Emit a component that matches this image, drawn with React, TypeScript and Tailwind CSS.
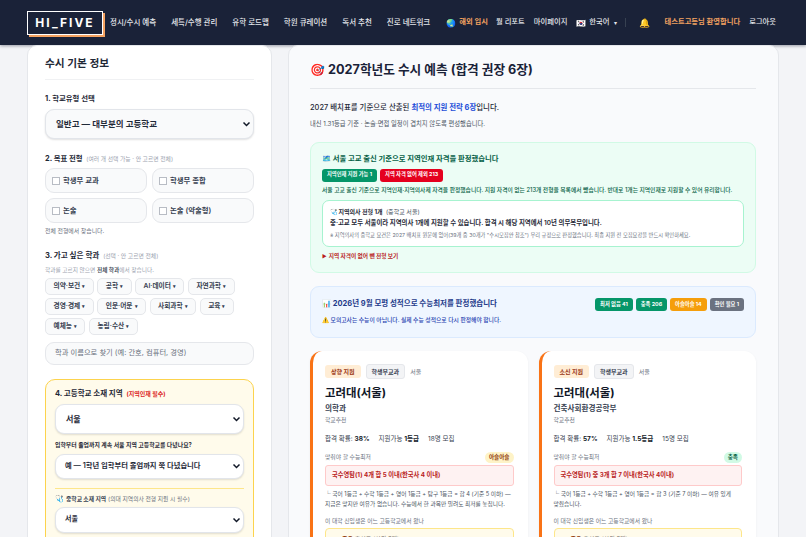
const navLinks = ["정시/수시 예측", "세특/수행 관리", "유학 로드맵", "학원 큐레이션", "독서 추천", "진로 네트워크"];
const majors = [
  ["의약·보건", "공학", "AI·데이터", "자연과학"],
  ["경영·경제", "인문·어문", "사회과학", "교육"],
  ["예체능", "농림·수산"],
];

function Chevron() {
  return (
    <svg viewBox="0 0 12 12" className="absolute right-[2px] top-1/2 h-[9px] w-[9px] -translate-y-1/2" fill="none" stroke="#111827" strokeWidth="2">
      <path d="M2 4l4 4 4-4" />
    </svg>
  );
}

function SelectBox({ label, className }: { label: string; className: string }) {
  return (
    <div className={`relative flex items-center rounded-[9px] border border-[#e2e5ea] shadow-[0_1px_2px_rgba(0,0,0,0.12)] ${className}`}>
      <span className="text-[#1f2937]">{label}</span>
      <Chevron />
    </div>
  );
}

function Check({ label }: { label: string }) {
  return (
    <div className="flex h-[25px] items-center gap-[3px] rounded-[9px] border border-[#e5e7eb] bg-[#f9fafb] pl-[6px] text-[7.4px] font-semibold text-[#374151]">
      <span className="h-[8px] w-[8px] border border-[#b8bcc4] bg-white" />
      {label}
    </div>
  );
}

function Tag({ className, children }: { className: string; children: string }) {
  return <span className={`flex h-[13px] items-center rounded-[3px] px-[5px] text-[5.3px] font-bold text-white ${className}`}>{children}</span>;
}

function Card({ tone, major, prob, grade, seats, status, statusClass, rule, detail }: {
  tone: string; major: string; prob: string; grade: string; seats: string; status: string; statusClass: string; rule: string; detail: string[];
}) {
  return (
    <div className="h-[240px] min-w-0 flex-1 rounded-[12px] border-l-[3px] border-[#f97316] bg-white pl-[12px] pr-[14px] pt-[13px] shadow-[0_1px_3px_rgba(15,23,42,0.05)]">
      <div className="flex items-center gap-[5px]">
        <span className="flex h-[13px] items-center rounded-[3px] bg-[#ffedd5] px-[6px] text-[6px] font-bold text-[#9a3412]">{tone}</span>
        <span className="flex h-[15px] items-center rounded-[3px] border border-[#e5e7eb] bg-[#f3f4f6] px-[5px] text-[6px] font-bold text-[#374151]">학생부교과</span>
        <span className="text-[6px] text-[#6b7280]">서울</span>
      </div>
      <div className="mt-[6px] text-[11.4px] font-bold leading-[16px] text-[#111827]">고려대(서울)</div>
      <div className="mt-[2px] text-[7.6px] font-semibold leading-[12px] text-[#374151]">{major}</div>
      <div className="text-[5.8px] leading-[10px] text-[#6b7280]">학교추천</div>
      <div className="mt-[8px] flex gap-[9px] text-[6.5px] leading-[12px] text-[#374151]">
        <span>합격 확률: <b className="text-[#111827]">{prob}</b></span>
        <span>지원가능 <b className="text-[#111827]">{grade}</b></span>
        <span>{seats}</span>
      </div>
      <div className="mt-[7px] flex h-[11px] items-center justify-between text-[5.8px] text-[#6b7280]">
        맞춰야 할 수능최저
        <span className={`flex h-[11px] items-center rounded-full px-[4px] text-[5.6px] font-bold ${statusClass}`}>{status}</span>
      </div>
      <div className="mt-[2px] flex h-[21px] items-center rounded-[3px] border border-[#fecaca] bg-[#fef2f2] pl-[6px] text-[6.25px] font-bold text-[#b91c1c]">{rule}</div>
      <div className="mt-[3px] whitespace-nowrap text-[5.7px] leading-[10px] text-[#4b5563]">
        {detail.map((line) => <div key={line}>{line}</div>)}
      </div>
      <div className="mt-[7px] text-[5.8px] leading-[10px] text-[#6b7280]">이 대학 신입생은 어느 고등학교에서 왔나</div>
      <div className="mt-[2px] h-[40px] rounded-[4px] border border-[#fde68a] bg-[#fffbeb] pl-[16px] pt-[5px] text-[6px] leading-[9px] text-[#78716c]">
        <b className="text-[#92400e]">주요</b> 출신고 (상위 3개)
      </div>
    </div>
  );
}

export default function App() {
  return (
    <div className="h-[537px] w-[806px] overflow-hidden bg-[#f3f4f7]" style={{ fontFamily: 'Inter, "Noto Sans CJK KR", sans-serif' }}>
      {/* 헤더 */}
      <header className="flex h-[45px] items-center bg-[#1a2238] shadow-[0_1px_3px_rgba(15,23,42,0.4)]">
        <div className="ml-[27px] flex h-[24px] w-[76px] items-center justify-center border border-white bg-[#1a2238] text-[12px] font-bold tracking-[2px] text-white shadow-[2px_2px_0_#f4a261]">HI_FIVE</div>
        <nav className="ml-[7px] flex gap-[15px] text-[7.5px] font-medium text-[#e5e7eb]">
          {navLinks.map((l) => <span key={l}>{l}</span>)}
        </nav>
        <div className="ml-[16px] flex items-center text-[7.3px] font-medium text-[#e5e7eb]">
          <span className="text-[8px]">🌏</span>
          <span className="ml-[3px] font-semibold text-[#f4a261]">해외 입시</span>
          <span className="ml-[8px]">월 리포트</span>
          <span className="ml-[9px]">마이페이지</span>
          <span className="ml-[9px] text-[8px]">🇰🇷</span>
          <span className="ml-[3px]">한국어</span>
          <span className="ml-[4px] text-[6px]">▾</span>
          <span className="ml-[8px] h-[9px] w-px bg-[#374151]" />
          <span className="ml-[13px] text-[9px]">🔔</span>
          <span className="ml-[15px] font-semibold text-[#f4a261]">테스트고등님 환영합니다</span>
          <span className="ml-[9px]">로그아웃</span>
        </div>
      </header>

      <div className="flex items-start gap-[16px] pl-[27px]">
        {/* 왼쪽 폼 */}
        <aside className="h-[520px] w-[245px] shrink-0 rounded-[10px] border border-[#e5e7eb] bg-white px-[17px] pt-[11px]">
          <h2 className="border-b border-[#f0f1f3] pb-[8px] text-[10.7px] font-bold leading-[14px] text-[#1f2937]">수시 기본 정보</h2>

          <div className="mt-[14px] text-[7.4px] font-bold leading-[10px] text-[#1f2937]">1. 학교유형 선택</div>
          <SelectBox label="일반고 — 대부분의 고등학교" className="mt-[5px] h-[30px] bg-[#f9fafb] pl-[10px] text-[8.5px] font-semibold" />

          <div className="mt-[14px] text-[7.4px] font-bold leading-[11px] text-[#1f2937]">2. 목표 전형 <span className="ml-[2px] text-[5.8px] font-normal text-[#9ca3af]">(여러 개 선택 가능 · 안 고르면 전체)</span></div>
          <div className="mt-[4px] grid grid-cols-2 gap-[5px]">
            <Check label="학생부 교과" />
            <Check label="학생부 종합" />
            <Check label="논술" />
            <Check label="논술 (약술형)" />
          </div>
          <div className="mt-[3px] text-[5.9px] leading-[10px] text-[#6b7280]">전체 전형에서 찾습니다.</div>

          <div className="mt-[14px] text-[7.6px] font-bold leading-[11px] text-[#1f2937]">3. 가고 싶은 학과 <span className="ml-[2px] text-[5.8px] font-normal text-[#9ca3af]">(선택 · 안 고르면 전체)</span></div>
          <div className="mt-[4px] text-[5.7px] leading-[9px] text-[#9ca3af]">학과를 고르지 않으면 <b className="text-[#4b5563]">전체 학과</b>에서 찾습니다.</div>
          <div className="mt-[4px] flex flex-col gap-[3px]">
            {majors.map((row) => (
              <div key={row[0]} className="flex gap-[3.5px]">
                {row.map((m) => (
                  <span key={m} className="flex h-[17px] items-center gap-[2px] rounded-[5px] border border-[#e5e7eb] bg-[#f9fafb] px-[7.5px] text-[6.7px] font-semibold text-[#374151]">
                    {m}<span className="text-[5px]">▾</span>
                  </span>
                ))}
              </div>
            ))}
          </div>
          <div className="mt-[7px] flex h-[23px] items-center rounded-[9px] border border-[#e5e7eb] bg-[#f9fafb] pl-[9px] text-[7.3px] text-[#6b7280]">학과 이름으로 찾기 (예: 간호, 컴퓨터, 경영)</div>

          <div className="mt-[14px] h-[200px] rounded-[10px] border-[1.5px] border-[#fcd34d] bg-[#fffbeb] px-[9px] pt-[8px]">
            <div className="text-[7.5px] font-bold leading-[11px] text-[#1f2937]">4. 고등학교 소재 지역 <span className="ml-[2px] text-[6px] text-[#dc2626]">(지역인재 필수)</span></div>
            <SelectBox label="서울" className="mt-[5px] h-[30px] bg-white pl-[10px] text-[8px] font-semibold" />
            <div className="mt-[5.5px] text-[5.9px] font-semibold leading-[10px] text-[#1f2937]">입학부터 졸업까지 계속 서울 지역 고등학교를 다녔나요?</div>
            <SelectBox label="예 — 1학년 입학부터 졸업까지 쭉 다녔습니다" className="mt-[4px] h-[25px] bg-white pl-[9px] text-[7.3px] font-semibold" />
            <div className="mt-[9px] flex items-center border-t border-[#fde68a] pt-[5px] text-[5.8px] font-bold leading-[10px] text-[#374151]">
              <span className="mr-[2px] text-[7px]">🩺</span>중학교 소재 지역 <span className="ml-[2px] font-normal text-[#6b7280]">(의대 지역의사 전형 지원 시 필수)</span>
            </div>
            <SelectBox label="서울" className="mt-[3px] h-[26px] bg-white pl-[9px] text-[7px] font-semibold" />
          </div>
        </aside>

        {/* 오른쪽 결과 */}
        <main className="h-[520px] w-[491px] shrink-0 rounded-[10px] border border-[#e5e7eb] bg-[#f9fafc] pl-[21px] pr-[22px] pt-[14px]">
          <h1 className="flex items-center gap-[3px] border-b border-[#e5e7eb] pb-[8.5px] text-[12.7px] font-bold leading-[19px] text-[#1a2238]">
            <span className="text-[12px]">🎯</span> 2027학년도 수시 예측 (합격 권장 6장)
          </h1>
          <p className="mt-[13px] text-[7.45px] font-medium leading-[12px] text-[#1f2937]">2027 배치표를 기준으로 산출된 <b className="text-[#1d4ed8]">최적의 지원 전략 6장</b>입니다.</p>
          <p className="mt-[5px] text-[6.3px] leading-[10px] text-[#4b5563]">내신 1.31등급 기준 · 논술·면접 일정이 겹치지 않도록 편성했습니다.</p>

          <section className="mt-[13px] h-[131px] rounded-[9px] border border-[#d1fae5] bg-[#ecfdf5] px-[11px] pt-[9px]">
            <div className="text-[7.35px] font-bold leading-[13px] text-[#065f46]">🗺️ 서울 고교 출신 기준으로 지역인재 자격을 판정했습니다</div>
            <div className="mt-[4px] flex gap-[3px]">
              <Tag className="bg-[#059669]">지역인재 지원 가능 1</Tag>
              <Tag className="bg-[#e5001e]">지역 자격 없어 제외 213</Tag>
            </div>
            <p className="mt-[3px] whitespace-nowrap text-[5.77px] font-medium leading-[10px] text-[#065f46]">서울 고교 출신 기준으로 지역인재·지역의사제 자격을 판정했습니다. 지원 자격이 없는 213개 전형을 목록에서 뺐습니다. 반대로 1개는 지역인재로 지원할 수 있어 유리합니다.</p>
            <div className="mt-[5px] h-[47px] rounded-[7px] border border-[#a7f3d0] bg-white pl-[7px] pt-[6px]">
              <div className="text-[6px] font-bold leading-[10px] text-[#1f2937]">🩺 지역의사 전형 1개 <span className="ml-[2px] font-normal text-[#4b5563]">(중학교 서울)</span></div>
              <div className="mt-[1px] text-[6.4px] font-semibold leading-[11px] text-[#1f2937]">중·고교 모두 서울이라 지역의사 1개에 지원할 수 있습니다. 합격 시 해당 지역에서 10년 의무복무입니다.</div>
              <div className="mt-[1px] whitespace-nowrap text-[5.25px] leading-[11px] text-[#6b7280]">※ 지역의사의 중학교 요건은 2027 배치표 원문에 없어(39개 중 30개가 "수시모집안 참조") 우리 규정으로 판정했습니다. 최종 지원 전 모집요강을 반드시 확인하세요.</div>
            </div>
            <div className="mt-[4px] text-[5.7px] font-bold leading-[10px] text-[#b91c1c]"><span className="mr-[2px] text-[5px]">▶</span>지역 자격이 없어 뺀 전형 보기</div>
          </section>

          <section className="mt-[13.5px] flex h-[52px] items-start justify-between rounded-[9px] border border-[#dbeafe] bg-[#eff6ff] px-[11px] pt-[11px]">
            <div>
              <div className="text-[7.5px] font-bold leading-[12px] text-[#1e3a8a]">📊 2026년 9월 모평 성적으로 수능최저를 판정했습니다</div>
              <div className="mt-[5px] text-[5.8px] font-medium leading-[10px] text-[#1e40af]">⚠️ 모의고사는 수능이 아닙니다. 실제 수능 성적으로 다시 판정해야 합니다.</div>
            </div>
            <div className="flex gap-[3px]">
              <Tag className="bg-[#059669]">최저 없음 41</Tag>
              <Tag className="bg-[#059669]">충족 206</Tag>
              <Tag className="bg-[#f59e0b]">아슬아슬 14</Tag>
              <Tag className="bg-[#6b7280]">확인 필요 1</Tag>
            </div>
          </section>

          <div className="mt-[13px] flex gap-[11px]">
            <Card tone="상향 지원" major="의학과" prob="38%" grade="1등급" seats="18명 모집" status="아슬아슬" statusClass="bg-[#fef3c7] text-[#92400e]"
              rule="국수영탐(1) 4개 합 5 이내(한국사 4 이내)"
              detail={["└ 국어 1등급 + 수학 1등급 + 영어 1등급 + 탐구 1등급 = 합 4 (기준 5 이하) —", "지금은 맞지만 여유가 없습니다. 수능에서 한 과목만 밀려도 최저를 놓칩니다."]} />
            <Card tone="소신 지원" major="건축사회환경공학부" prob="57%" grade="1.5등급" seats="15명 모집" status="충족" statusClass="bg-[#d1fae5] text-[#065f46]"
              rule="국수영탐(1) 중 3개 합 7 이내(한국사 4이내)"
              detail={["└ 국어 1등급 + 수학 1등급 + 영어 1등급 = 합 3 (기준 7 이하) — 여유 있게", "맞췄습니다."]} />
          </div>
        </main>
      </div>
    </div>
  );
}
